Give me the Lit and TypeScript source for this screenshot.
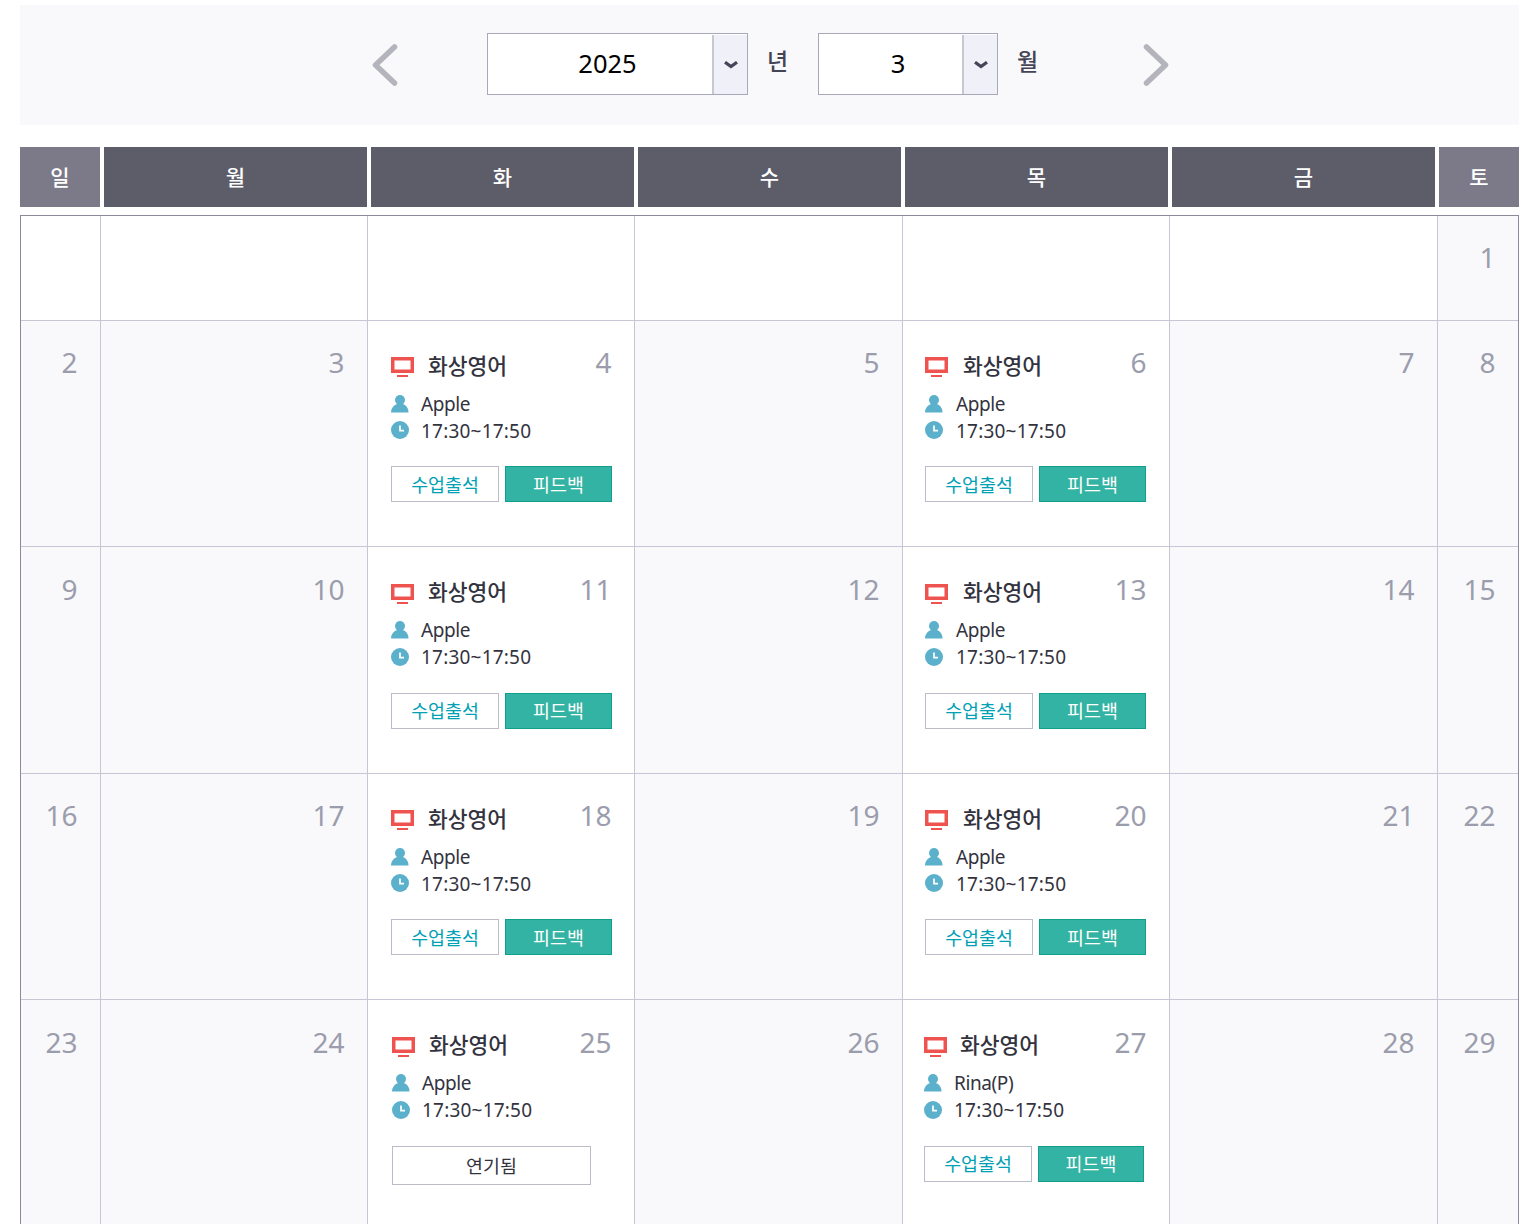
import { LitElement, html, css, svg } from "lit";
import { customElement } from "lit/decorators.js";

type Ev = { who: string; left: number; cls?: string; postponed?: boolean };

const chevronDown = svg`<path d="M1 1.2 L7 5.6 L13 1.2" fill="none" stroke="#45455a" stroke-width="3.2"/>`;

const weekdays: { label: string; weekend: boolean }[] = [
  { label: "일", weekend: true },
  { label: "월", weekend: false },
  { label: "화", weekend: false },
  { label: "수", weekend: false },
  { label: "목", weekend: false },
  { label: "금", weekend: false },
  { label: "토", weekend: true },
];

const events: Record<number, Ev> = {
  4: { who: "Apple", left: 23 },
  6: { who: "Apple", left: 22, cls: "thu" },
  11: { who: "Apple", left: 23 },
  13: { who: "Apple", left: 22, cls: "thu" },
  18: { who: "Apple", left: 23 },
  20: { who: "Apple", left: 22, cls: "thu" },
  25: { who: "Apple", left: 24, postponed: true },
  27: { who: "Rina(P)", left: 21, cls: "rina" },
};

@customElement("app-root")
export class AppRoot extends LitElement {
  static styles = css`
    :host {
      display: block;
      height: 1224px;
      overflow: hidden;
      box-sizing: border-box;
      padding: 5px 21px 0 20px;
      background: #fff;
      font-family: "Noto Sans", "Noto Sans CJK KR", sans-serif;
      color: #333340;
    }
    .bar {
      height: 120px;
      background: #f9f9fb;
      display: flex;
      align-items: center;
      justify-content: center;
    }
    .nav { display: block; flex: none; }
    .prev { margin: 0 89px 0 2px; }
    .next { margin-left: 104px; }
    .select {
      flex: none;
      box-sizing: border-box;
      height: 62px;
      margin-bottom: 2px;
      border: 1px solid #a8a8b8;
      background: #fff;
      display: flex;
      color: #000;
      font-size: 25.5px;
    }
    .select.year { width: 261px; }
    .select.month { width: 180px; }
    .value {
      flex: 1;
      display: flex;
      align-items: center;
      justify-content: center;
      padding: 0 0 2px 15px;
    }
    .arrow {
      flex: none;
      width: 33px;
      background: #f0f0f9;
      border-left: 2px solid #c8c8d4;
      margin-top: 1px;
      display: flex;
      align-items: center;
      justify-content: center;
    }
    .unit {
      flex: none;
      font-size: 23px;
      font-weight: 500;
      color: #444455;
      margin: -8px 0 0 19px;
      width: 22px;
      line-height: 30px;
    }
    .unit.gap { margin-right: 29px; }
    .head {
      margin-top: 22px;
      display: grid;
      grid-template-columns: 80px 263px 263px 263px 263px 263px 80px;
      column-gap: 4px;
    }
    .head div {
      box-sizing: border-box;
      height: 60px;
      padding-bottom: 2px;
      background: #5d5d6a;
      color: #fff;
      font-size: 21px;
      font-weight: 500;
      display: flex;
      align-items: center;
      justify-content: center;
    }
    .head div.weekend { background: #7c7a88; }
    .cal {
      margin-top: 8px;
      width: 1499px;
      box-sizing: border-box;
      border: 1px solid #8a8a98;
      border-bottom: 0;
      display: grid;
      grid-template-columns: 80px 267px 267px 268px 267px 268px 80px;
      grid-template-rows: 104.5px repeat(4, 226.5px);
    }
    .cell {
      box-sizing: border-box;
      border-right: 1px solid #c6c7d4;
      border-bottom: 1px solid #c6c7d4;
      display: grid;
      align-items: start;
      min-width: 0;
    }
    .cell:nth-child(7n) { border-right: 0; }
    .cell.date { background: #f9f9fb; }
    .cell > * { grid-area: 1 / 1; }
    .num {
      justify-self: end;
      padding: 21.5px 22.5px 0 0;
      font-size: 28px;
      line-height: 40px;
      color: #9b9dad;
    }
    .cell:nth-child(7) .num { padding-top: 20.5px; }
    .event { padding-top: 36.5px; justify-self: start; }
    .title {
      display: flex;
      align-items: center;
      gap: 14px;
      height: 20px;
      font-size: 21.5px;
      font-weight: 500;
      color: #333340;
    }
    .title span { padding-bottom: 6px; }
    .title svg, .meta svg { display: block; flex: none; }
    .metas { margin-top: 13.2px; }
    .meta {
      display: flex;
      align-items: center;
      gap: 12px;
      height: 27px;
      font-size: 19px;
      color: #333340;
      white-space: nowrap;
    }
    .thu .title { gap: 15px; }
    .thu .meta { gap: 13px; }
    .rina .title { gap: 13px; }
    .meta .who { letter-spacing: -0.4px; }
    .meta .time { letter-spacing: 0.2px; }
    .meta .clock { margin-top: -1px; }
    .btns { display: flex; gap: 6px; margin-top: 21.9px; }
    .btn {
      box-sizing: border-box;
      height: 36px;
      padding-bottom: 1px;
      display: flex;
      align-items: center;
      justify-content: center;
      font-size: 18.4px;
      white-space: nowrap;
    }
    .attend {
      width: 108px;
      background: #fff;
      border: 1px solid #bbbcc8;
      color: #00a0b5;
    }
    .feedback {
      width: 107px;
      background: #33b3a3;
      border: 1px solid #0f9f8c;
      color: #fff;
    }
    .rina .feedback { width: 106px; }
    .later {
      width: 199px;
      height: 39px;
      background: #fff;
      border: 1px solid #bbbcc8;
      color: #333340;
    }
  `;

  private select(kind: string, value: string) {
    return html`<div class="select ${kind}">
      <div class="value">${value}</div>
      <div class="arrow">
        <svg width="14" height="8" viewBox="0 0 14 8">${chevronDown}</svg>
      </div>
    </div>`;
  }

  private eventBlock(ev: Ev) {
    return html`<div class="event ${ev.cls ?? ""}" style="margin-left:${ev.left}px">
      <div class="title">
        <svg width="23" height="20" viewBox="0 0 23 20">
          <rect x="1.75" y="1.75" width="19.5" height="12.5" fill="none" stroke="#ef5350" stroke-width="3.5" />
          <rect x="6" y="18" width="11" height="2" fill="#ef5350" />
        </svg>
        <span>화상영어</span>
      </div>
      <div class="metas">
        <div class="meta">
          <svg width="18" height="18" viewBox="0 0 18 18">
            <circle cx="9" cy="5" r="5" fill="#5bb0cc" />
            <path d="M0 17.5 C0 12.5 3.5 10 6 9 L12 9 C14.5 10 17.5 12.5 17.5 17.5 Z" fill="#5bb0cc" />
          </svg>
          <span class="who">${ev.who}</span>
        </div>
        <div class="meta">
          <svg class="clock" width="18" height="18" viewBox="0 0 18 18">
            <circle cx="9" cy="9" r="9" fill="#5bb0cc" />
            <path d="M9 4.5 V9.7 H13" fill="none" stroke="#fff" stroke-width="1.7" />
          </svg>
          <span class="time">17:30~17:50</span>
        </div>
      </div>
      <div class="btns">
        ${ev.postponed
          ? html`<div class="btn later">연기됨</div>`
          : html`<div class="btn attend">수업출석</div>
              <div class="btn feedback">피드백</div>`}
      </div>
    </div>`;
  }

  private cell(day: number) {
    if (day < 1) return html`<div class="cell"></div>`;
    const ev = events[day];
    return html`<div class="cell ${ev ? "" : "date"}">
      <div class="num">${day}</div>
      ${ev ? this.eventBlock(ev) : ""}
    </div>`;
  }

  render() {
    const days = Array.from({ length: 35 }, (_, i) => i - 5);
    return html`
      <div class="bar">
        <svg class="nav prev" width="26" height="44" viewBox="0 0 26 44">
          <path d="M22.5 4 L3.5 22 L22.5 40" fill="none" stroke="#b4b4bc" stroke-width="5.5" stroke-linecap="round" stroke-linejoin="round" />
        </svg>
        ${this.select("year", "2025")}
        <div class="unit gap">년</div>
        ${this.select("month", "3")}
        <div class="unit">월</div>
        <svg class="nav next" width="26" height="44" viewBox="0 0 26 44">
          <path d="M3.5 4 L22.5 22 L3.5 40" fill="none" stroke="#b4b4bc" stroke-width="5.5" stroke-linecap="round" stroke-linejoin="round" />
        </svg>
      </div>
      <div class="head">
        ${weekdays.map((d) => html`<div class=${d.weekend ? "weekend" : ""}>${d.label}</div>`)}
      </div>
      <div class="cal">${days.map((d) => this.cell(d))}</div>
    `;
  }
}
